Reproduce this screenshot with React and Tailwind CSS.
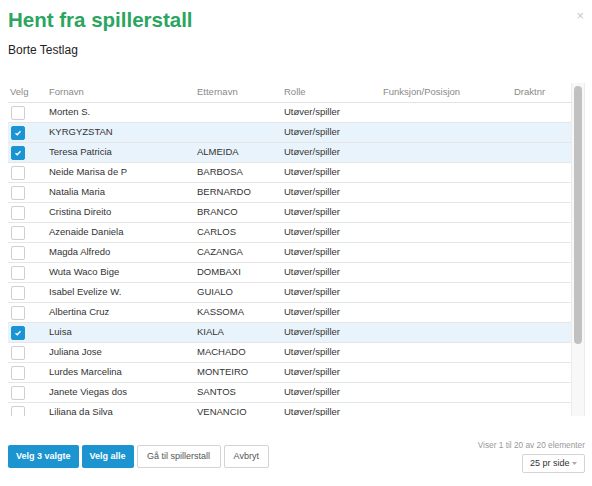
import React, { useState } from "react";

const players = [
  { first: "Morten S.", last: "" },
  { first: "KYRGYZSTAN", last: "", checked: true },
  { first: "Teresa Patricia", last: "ALMEIDA", checked: true },
  { first: "Neide Marisa de P", last: "BARBOSA" },
  { first: "Natalia Maria", last: "BERNARDO" },
  { first: "Cristina Direito", last: "BRANCO" },
  { first: "Azenaide Daniela", last: "CARLOS" },
  { first: "Magda Alfredo", last: "CAZANGA" },
  { first: "Wuta Waco Bige", last: "DOMBAXI" },
  { first: "Isabel Evelize W.", last: "GUIALO" },
  { first: "Albertina Cruz", last: "KASSOMA" },
  { first: "Luisa", last: "KIALA", checked: true },
  { first: "Juliana Jose", last: "MACHADO" },
  { first: "Lurdes Marcelina", last: "MONTEIRO" },
  { first: "Janete Viegas dos", last: "SANTOS" },
  { first: "Liliana da Silva", last: "VENANCIO" },
];

const cols = "grid grid-cols-[38px_148px_87px_99px_131px_1fr]";

const Checkbox = ({ checked, onClick }) => (
  <button
    onClick={onClick}
    className={`w-[14px] h-[14px] rounded-[2px] flex items-center justify-center ${
      checked ? "bg-[#1b94d4] border border-[#1b94d4]" : "bg-white border border-[#cfcfcf]"
    }`}
  >
    {checked && (
      <svg width="8" height="8" viewBox="0 0 8 8">
        <path d="M1.5 4.2 L3.2 5.8 L6.5 2.2" fill="none" stroke="white" strokeWidth="1.4" />
      </svg>
    )}
  </button>
);

const App = () => {
  const [rows, setRows] = useState(players);

  const toggle = (i) =>
    setRows((r) => r.map((p, idx) => (idx === i ? { ...p, checked: !p.checked } : p)));

  return (
    <div
      className="w-[592px] h-[486px] bg-white relative overflow-hidden text-[#333]"
      style={{ fontFamily: '"Liberation Sans", Arial, sans-serif' }}
    >
      <div className="absolute right-[8px] top-[6px] text-[#c8c8c8] text-[13px]">×</div>

      <div className="pl-[8px] pr-[7px] pt-[6px]">
        <h1 className="text-[20.5px] font-bold text-[#2ba55f] leading-[28px]">Hent fra spillerstall</h1>
        <div className="text-[12px] font-medium text-[#222] mt-[9px] leading-[14px]">Borte Testlag</div>

        <div className="mt-[26px] flex h-[333px]">
          <div className="flex-1 overflow-hidden">
            <div className={`${cols} h-[20px] items-center border-b border-[#e2e2e2] text-[9.5px] text-[#8a8a8a]`}>
              <div className="pl-[2px]">Velg</div>
              <div className="pl-[3px]">Fornavn</div>
              <div className="pl-[3px]">Etternavn</div>
              <div className="pl-[3px]">Rolle</div>
              <div className="pl-[3px]">Funksjon/Posisjon</div>
              <div className="pl-[3px]">Draktnr</div>
            </div>
            {rows.map((p, i) => (
              <div
                key={i}
                className={`${cols} h-[20px] items-center border-b border-[#e6e6e6] text-[9.5px] text-[#333] ${
                  p.checked ? "bg-[#e9f3fc]" : "bg-white"
                }`}
              >
                <div className="pl-[3px] flex items-center">
                  <Checkbox checked={p.checked} onClick={() => toggle(i)} />
                </div>
                <div className="pl-[3px]">{p.first}</div>
                <div className="pl-[3px]">{p.last}</div>
                <div className="pl-[3px]">Utøver/spiller</div>
                <div className="pl-[3px]"></div>
                <div className="pl-[3px]"></div>
              </div>
            ))}
          </div>
          <div className="w-[14px] bg-[#f8f8f8] border-l border-r border-[#ececec] pt-[3px] pl-[2px]">
            <div className="w-[8px] h-[258px] rounded-full bg-[#c1c1c1]"></div>
          </div>
        </div>

        <div className="mt-[23px] flex items-start justify-between">
          <div className="flex gap-[3px] mt-[6px]">
            <button className="h-[23px] px-[8px] rounded-[2px] bg-[#1b94cf] text-white text-[9px] font-bold">
              Velg 3 valgte
            </button>
            <button className="h-[23px] px-[8px] rounded-[2px] bg-[#1b94cf] text-white text-[9px] font-bold">
              Velg alle
            </button>
            <button className="h-[23px] px-[9.5px] rounded-[2px] bg-white border border-[#d4d4d4] text-[#555] text-[9px]">
              Gå til spillerstall
            </button>
            <button className="h-[23px] px-[9px] rounded-[2px] bg-white border border-[#d4d4d4] text-[#555] text-[9px]">
              Avbryt
            </button>
          </div>
          <div className="flex flex-col items-end">
            <div className="text-[8.3px] text-[#999] leading-[12px]">Viser 1 til 20 av 20 elementer</div>
            <div className="mt-[3px] w-[63px] h-[19px] border border-[#d4d4d4] rounded-[2px] flex items-center pl-[7px] pr-[7px] text-[9px] text-[#333] whitespace-nowrap">
              <span className="flex-1">25 pr side</span>
              <svg width="5" height="3" viewBox="0 0 5 3" className="shrink-0">
                <path d="M0 0 L5 0 L2.5 3 Z" fill="#aaa" />
              </svg>
            </div>
          </div>
        </div>
      </div>
    </div>
  );
};

export default App;
